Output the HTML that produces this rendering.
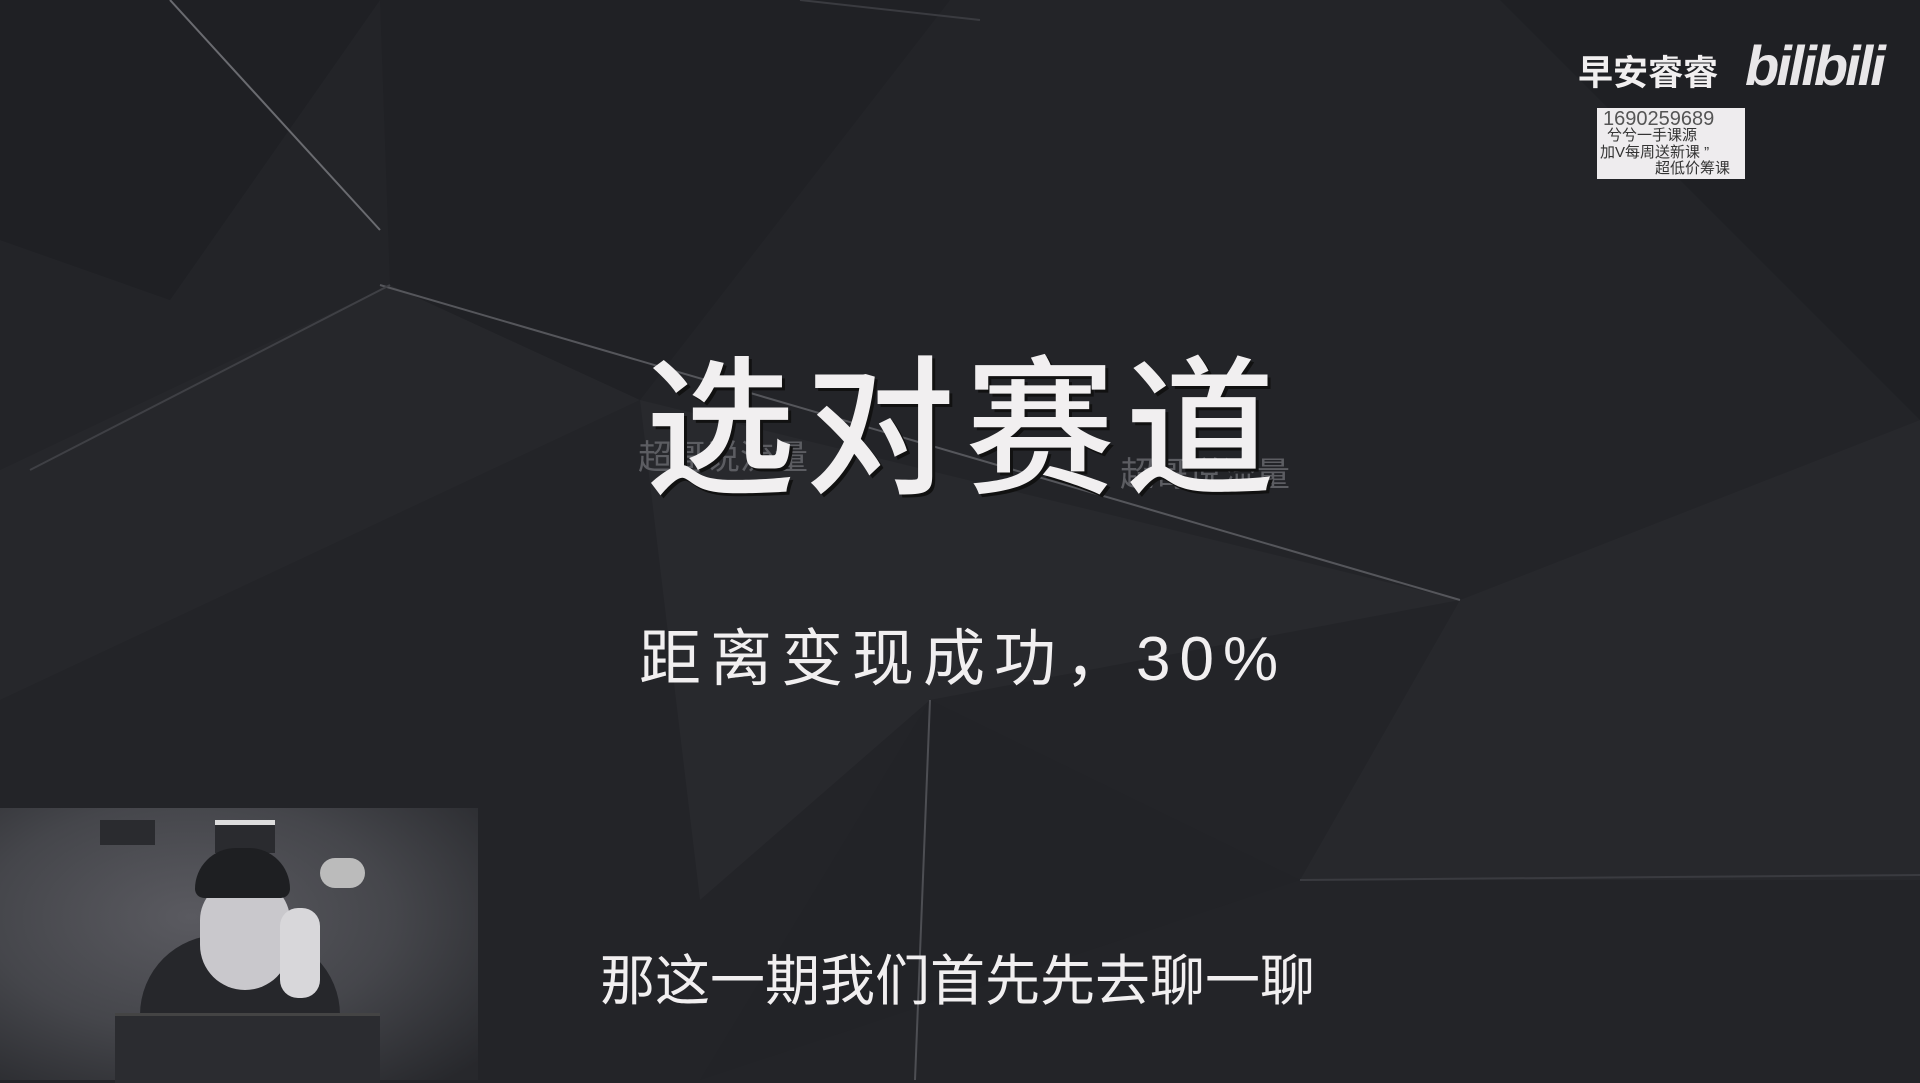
<!DOCTYPE html>
<html><head><meta charset="utf-8"><style>
html,body{margin:0;padding:0;}
body{width:1920px;height:1080px;overflow:hidden;background:#232428;position:relative;font-family:"Liberation Sans","Noto Sans CJK SC",sans-serif;}
.t{position:absolute;color:#f1eff0;white-space:nowrap;}
</style></head><body>
<svg width="1920" height="1080" style="position:absolute;left:0;top:0">
<polygon points="0,0 380,0 170,300 0,240" fill="#1f2024"/>
<polygon points="380,0 950,0 640,400 390,285" fill="#202125"/>
<polygon points="0,470 390,285 640,400 0,700" fill="#26272b"/>
<polygon points="640,400 1460,600 930,700 700,900" fill="#28292d"/>
<polygon points="1460,600 1920,420 1920,880 1300,880" fill="#27282c"/>
<polygon points="930,700 1300,880 700,1080" fill="#222327"/>
<polygon points="1500,0 1920,0 1920,420 1700,200" fill="#1f2024"/>
<line x1="170" y1="0" x2="380" y2="230" stroke="#6a6b70" stroke-width="2"/>
<line x1="380" y1="285" x2="1460" y2="600" stroke="#55565b" stroke-width="2"/>
<line x1="30" y1="470" x2="390" y2="285" stroke="#3f4045" stroke-width="2"/>
<line x1="930" y1="700" x2="915" y2="1080" stroke="#4d4e53" stroke-width="2"/>
<line x1="800" y1="0" x2="980" y2="20" stroke="#3a3b40" stroke-width="2"/>
<line x1="1300" y1="880" x2="1920" y2="875" stroke="#3a3b40" stroke-width="2"/>
</svg>
<div class="t" style="left:638px;top:430px;font-size:34px;color:#5c5d62">超哥说流量</div>
<div class="t" style="left:1120px;top:447px;font-size:34px;color:#5c5d62">超哥说流量</div>
<div class="t" style="left:645px;top:345px;font-size:150px;font-weight:500;letter-spacing:10px;line-height:170px;text-shadow:3px 3px 0 #111">选对赛道</div>
<div class="t" style="left:639px;top:622px;font-size:62px;line-height:76px;letter-spacing:9px">距离变现成功，30%</div>
<div class="t" style="left:600px;top:948px;font-size:55px;line-height:66px">那这一期我们首先先去聊一聊</div>
<div class="t" style="left:1578px;top:52px;font-size:35px;font-weight:bold;line-height:44px">早安睿睿</div>
<div class="t" style="left:1745px;top:34px;font-size:56px;font-weight:bold;font-style:italic;line-height:64px;letter-spacing:-3px;color:#e8e6e8">bilibili</div>
<div style="position:absolute;left:1597px;top:108px;width:148px;height:71px;background:#eeecee"></div>
<div class="t" style="left:1603px;top:108px;font-size:20px;color:#555;line-height:22px">1690259689</div>
<div class="t" style="left:1607px;top:128px;font-size:15px;color:#333;line-height:16px">兮兮一手课源</div>
<div class="t" style="left:1600px;top:145px;font-size:15px;color:#333;line-height:16px">加V每周送新课 ”</div>
<div class="t" style="left:1655px;top:161px;font-size:15px;color:#333;line-height:16px">超低价筹课</div>
<div style="position:absolute;left:0;top:808px;width:478px;height:272px;background:radial-gradient(ellipse at 40% 40%,#5a5a60 0%,#45464b 50%,#27282c 95%)"></div>
<div style="position:absolute;left:100px;top:820px;width:55px;height:25px;background:#2a2b2f"></div>
<div style="position:absolute;left:215px;top:820px;width:60px;height:28px;background:#2a2b2f;border-top:5px solid #ddd"></div>
<div style="position:absolute;left:140px;top:935px;width:200px;height:145px;background:#26272b;border-radius:80px 80px 0 0"></div>
<div style="position:absolute;left:200px;top:880px;width:90px;height:110px;background:#c9c8cc;border-radius:40px 40px 45px 45px"></div>
<div style="position:absolute;left:195px;top:848px;width:95px;height:50px;background:#1e1f22;border-radius:45px 45px 10px 10px"></div>
<div style="position:absolute;left:280px;top:908px;width:40px;height:90px;background:#d8d7da;border-radius:18px"></div>
<div style="position:absolute;left:115px;top:1013px;width:265px;height:67px;background:#2b2c30;border-top:3px solid #444"></div>
<div style="position:absolute;left:320px;top:858px;width:45px;height:30px;background:#bbb;border-radius:15px"></div>
</body></html>
